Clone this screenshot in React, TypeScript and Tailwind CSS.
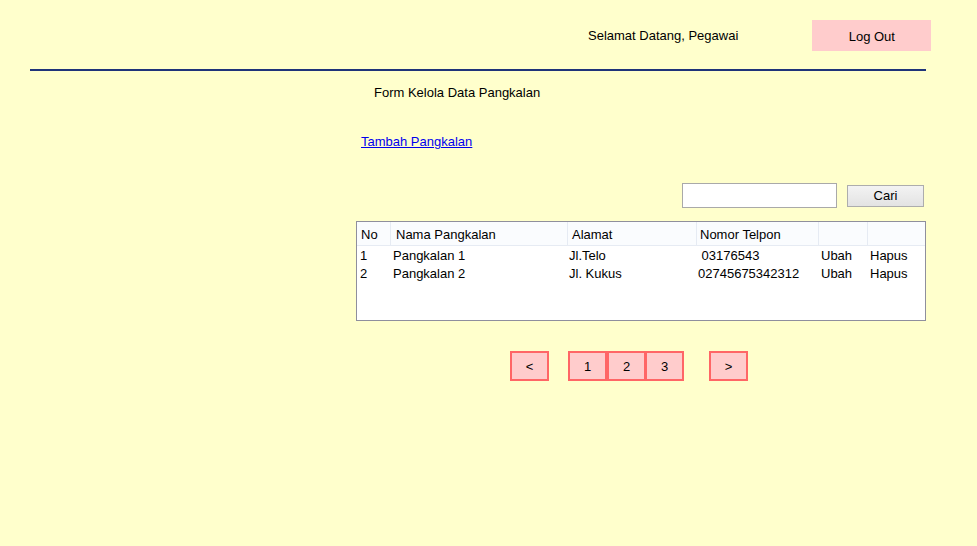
const rows = [
  { no: "1", nama: "Pangkalan 1", alamat: "Jl.Telo", telp: " 03176543" },
  { no: "2", nama: "Pangkalan 2", alamat: "Jl. Kukus", telp: "02745675342312" },
];

function HeaderCell({ label, w, pl }: { label: string; w: string; pl: string }) {
  return (
    <div className={`${w} ${pl} h-full pt-[2px] flex items-center border-r border-[#e6ebf3] shrink-0`}>
      {label}
    </div>
  );
}

function DataTable() {
  return (
    <div className="w-[570px] h-[100px] bg-white border border-[#8f8f9d] mt-[13px]">
      <div className="flex h-[24px] bg-[#fafcfe] border-b border-[#e6ebf3]">
        <HeaderCell label="No" w="w-[34px]" pl="pl-[4px]" />
        <HeaderCell label="Nama Pangkalan" w="w-[177px]" pl="pl-[5px]" />
        <HeaderCell label="Alamat" w="w-[129px]" pl="pl-[4px]" />
        <HeaderCell label="Nomor Telpon" w="w-[122px]" pl="pl-[3px]" />
        <HeaderCell label="" w="w-[49px]" pl="pl-0" />
        <div className="w-[57px] shrink-0" />
      </div>
      <div className="pt-px">
        {rows.map((r) => (
          <div key={r.no} className="flex h-[18px] items-center leading-[18px]">
            <div className="w-[34px] pl-[3px] shrink-0">{r.no}</div>
            <div className="w-[177px] pl-[2px] shrink-0">{r.nama}</div>
            <div className="w-[129px] pl-[1px] shrink-0">{r.alamat}</div>
            <div className="w-[122px] pl-[1px] shrink-0 whitespace-pre">{r.telp}</div>
            <div className="w-[49px] pl-[2px] shrink-0">Ubah</div>
            <div className="w-[57px] pl-[2px] shrink-0">Hapus</div>
          </div>
        ))}
      </div>
    </div>
  );
}

function PageButton({ label, className = "" }: { label: string; className?: string }) {
  return (
    <button className={`w-[39px] h-[30px] bg-[#ffcccc] border-2 border-[#ff6666] flex items-center justify-center ${className}`}>
      {label}
    </button>
  );
}

export default function App() {
  return (
    <div className="w-[977px] h-[546px] bg-[#ffffcc] text-[13px] text-black font-['Liberation_Sans',Arial,sans-serif] leading-[15px] overflow-hidden">
      <div className="flex items-center pt-[20px]">
        <p className="ml-[588px]">Selamat Datang, Pegawai</p>
        <button className="ml-[74px] w-[119px] h-[31px] bg-[#ffcccc] flex items-center justify-center pt-px">
          Log Out
        </button>
      </div>
      <div className="mt-[18px] ml-[30px] w-[896px] h-[2px] bg-[#1f3479]" />
      <div className="ml-[356px] w-[570px] flex flex-col">
        <p className="mt-[14px] ml-[18px]">Form Kelola Data Pangkalan</p>
        <a href="#" className="mt-[34px] ml-[5px] text-[#0000ee] underline self-start">
          Tambah Pangkalan
        </a>
        <div className="mt-[34px] flex items-center justify-end pr-[2px] gap-[10px]">
          <input className="w-[155px] h-[25px] bg-white border border-[#a9a9a9] outline-none px-1" />
          <button className="w-[77px] h-[22px] border border-[#adadad] bg-gradient-to-b from-[#f3f3f3] to-[#e3e3e3] flex items-center justify-center">
            Cari
          </button>
        </div>
        <DataTable />
        <div className="mt-[30px] ml-[154px] flex items-center">
          <PageButton label="<" />
          <PageButton label="1" className="ml-[19px]" />
          <PageButton label="2" />
          <PageButton label="3" className="-ml-px" />
          <PageButton label=">" className="ml-[25px]" />
        </div>
      </div>
    </div>
  );
}
